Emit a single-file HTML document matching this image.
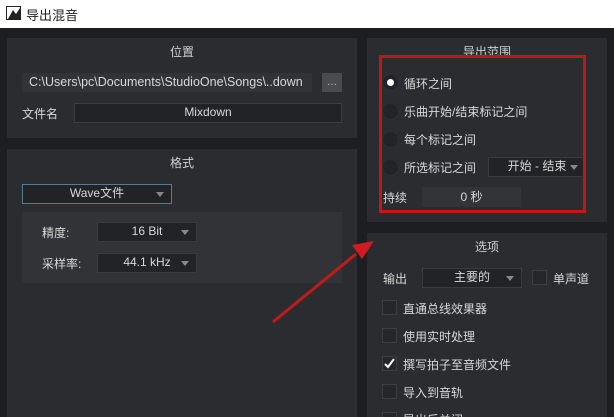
<html style="width:614px;height:417px;overflow:hidden"><head><style>
html,body{margin:0;width:614px;height:417px;overflow:hidden}
body{background:#1d1e21;font-family:"Liberation Sans","Noto Sans CJK SC",sans-serif;font-size:12px;color:#d8d8d8;position:relative}
.a{position:absolute}
.p{background:#2b2c30}
.h{text-align:center;color:#d0d0d0}
.box{background:#222326;border:1px solid #3a3b3f;box-sizing:border-box;text-align:center;line-height:17px}
.dd::after{content:"";position:absolute;right:7px;top:7px;border:4px solid transparent;border-top:5px solid #888}
.rb{width:17px;height:17px;border-radius:50%;background:#232427;border:1px solid #2e2f33;box-sizing:border-box}
.cb{width:15px;height:15px;border:1px solid #3c3d41;background:#26272a;box-sizing:border-box}
</style></head><body>
<div class="a" style="left:0;top:0;width:614px;height:28px;background:#fff;color:#222;font-size:13px">
<svg class="a" style="left:6px;top:6px" width="16" height="15"><rect x="0.5" y="0.5" width="14" height="13" fill="#fff" stroke="#222"/><path d="M2 13L7 4L10 8L14 2V13Z" fill="#222"/></svg>
<span class="a" style="left:26px;top:5px">导出混音</span></div>
<div class="a p" style="left:7px;top:38px;width:350px;height:100px"></div>
<div class="a h" style="left:7px;top:43px;width:350px">位置</div>
<div class="a" style="left:22px;top:73px;width:290px;height:19px;background:#323337;line-height:19px;padding-left:7px;box-sizing:border-box;font-size:12.5px">C:\Users\pc\Documents\StudioOne\Songs\..down</div>
<div class="a" style="left:322px;top:73px;width:20px;height:19px;background:#4a4b4f;color:#aaa;text-align:center;line-height:17px">...</div>
<div class="a" style="left:22px;top:105px">文件名</div>
<div class="a box" style="left:74px;top:103px;width:268px;height:20px">Mixdown</div>
<div class="a p" style="left:7px;top:149px;width:350px;height:268px"></div>
<div class="a h" style="left:7px;top:154px;width:350px">格式</div>
<div class="a box dd" style="left:22px;top:184px;width:150px;height:20px;border-color:#5a7a94">Wave文件</div>
<div class="a" style="left:22px;top:212px;width:320px;height:71px;background:#323337"></div>
<div class="a" style="left:42px;top:224px">精度:</div>
<div class="a box dd" style="left:97px;top:222px;width:100px;height:20px">16 Bit</div>
<div class="a" style="left:42px;top:255px">采样率:</div>
<div class="a box dd" style="left:97px;top:253px;width:100px;height:20px">44.1 kHz</div>
<div class="a p" style="left:367px;top:38px;width:240px;height:184px"></div>
<div class="a h" style="left:367px;top:43px;width:240px">导出范围</div>
<div class="a rb" style="left:382px;top:74px"></div><div class="a" style="left:387px;top:79px;width:7px;height:7px;border-radius:50%;background:#fff"></div>
<div class="a" style="left:404px;top:75px">循环之间</div>
<div class="a rb" style="left:382px;top:103px"></div><div class="a" style="left:404px;top:103px">乐曲开始/结束标记之间</div>
<div class="a rb" style="left:382px;top:131px"></div><div class="a" style="left:404px;top:131px">每个标记之间</div>
<div class="a rb" style="left:382px;top:159px"></div><div class="a" style="left:404px;top:159px">所选标记之间</div>
<div class="a box dd" style="left:488px;top:157px;width:98px;height:20px">开始 - 结束</div>
<div class="a" style="left:383px;top:189px">持续</div>
<div class="a" style="left:422px;top:187px;width:99px;height:20px;background:#333438;text-align:center;line-height:20px">0 秒</div>
<div class="a" style="left:379px;top:55px;width:207px;height:158px;border:3px solid #c0171b;box-sizing:border-box"></div>
<div class="a p" style="left:367px;top:233px;width:240px;height:184px"></div>
<div class="a h" style="left:367px;top:238px;width:240px">选项</div>
<div class="a" style="left:383px;top:270px">输出</div>
<div class="a box dd" style="left:422px;top:268px;width:100px;height:20px">主要的</div>
<div class="a cb" style="left:532px;top:270px"></div><div class="a" style="left:553px;top:270px">单声道</div>
<div class="a cb" style="left:382px;top:300px"></div><div class="a" style="left:403px;top:300px">直通总线效果器</div>
<div class="a cb" style="left:382px;top:328px"></div><div class="a" style="left:403px;top:328px">使用实时处理</div>
<div class="a cb" style="left:382px;top:356px"><svg width="13" height="13" style="position:absolute;left:0;top:0"><path d="M2 7L5 10L11 2" fill="none" stroke="#fff" stroke-width="2"/></svg></div><div class="a" style="left:403px;top:356px">撰写拍子至音频文件</div>
<div class="a cb" style="left:382px;top:384px"></div><div class="a" style="left:403px;top:384px">导入到音轨</div>
<div class="a cb" style="left:382px;top:412px"></div><div class="a" style="left:403px;top:411px">导出后关闭</div>
<svg class="a" style="left:0;top:0" width="614" height="417"><line x1="273" y1="322" x2="356" y2="254" stroke="#c41a1c" stroke-width="3"/><path d="M374 241L352 245L362 259Z" fill="#d01c1e"/></svg>
</body></html>
